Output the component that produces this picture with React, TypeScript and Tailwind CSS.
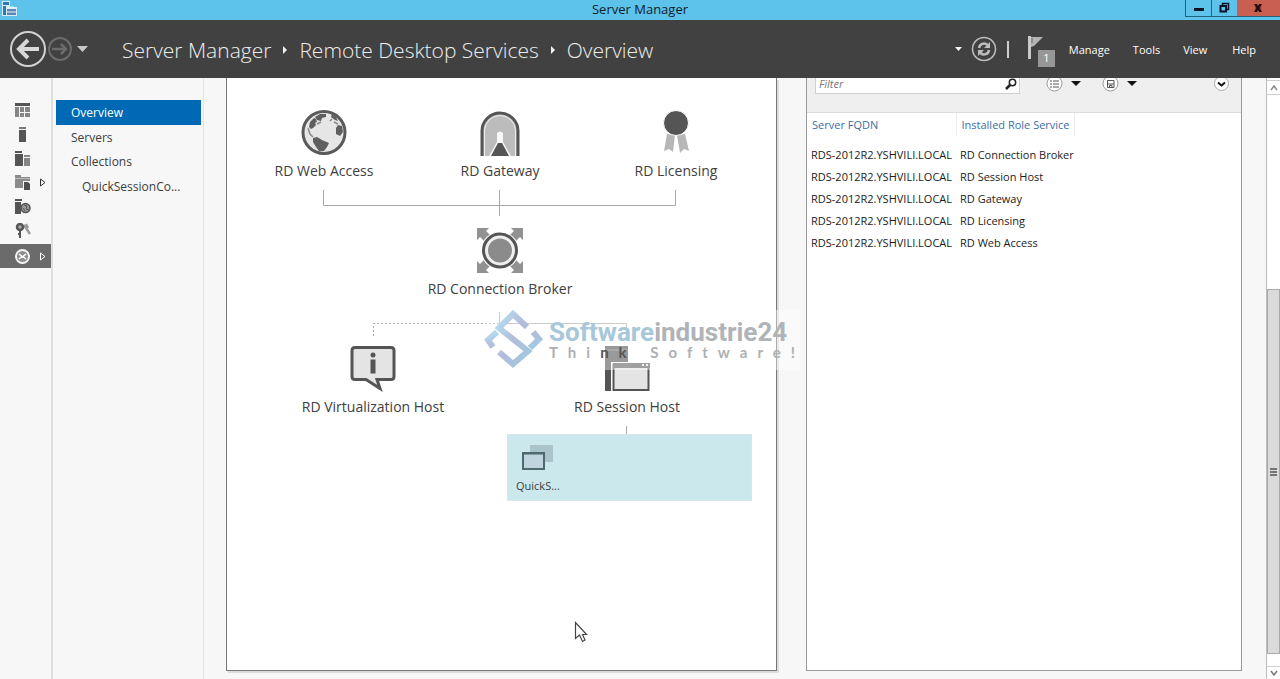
import React from 'react';

type NodeProps = { place: string; label: string; children: React.ReactNode };

const roles = [
  'RD Connection Broker',
  'RD Session Host',
  'RD Gateway',
  'RD Licensing',
  'RD Web Access',
];

function Node({ place, label, children }: NodeProps) {
  return (
    <div className={`absolute flex w-[180px] flex-col items-center ${place}`}>
      <svg className="h-[46px] w-[46px]" viewBox="0 0 46 46" aria-hidden="true">
        {children}
      </svg>
      <span className="mt-[5px] text-sm leading-5 whitespace-nowrap">{label}</span>
    </div>
  );
}

function AppIcon() {
  return (
    <svg className="h-4 w-4" viewBox="0 0 16 16" aria-hidden="true">
      <path d="M0 0h8v6h7v9H0z" fill="#d5edf8" />
      <path d="M1 1h6v3H1zM1 5h3v9H1z" fill="#2f78b4" />
      <path d="M5 8h9v6H5z" fill="#5f87b5" />
      <path d="M7 8V6h5v2M5 11h9" fill="none" stroke="#e6f3fa" />
    </svg>
  );
}

function TitleBar() {
  return (
    <div className="flex h-5 shrink-0 items-start bg-[#5dc3ea]">
      <div className="flex w-[95px] pt-px pl-0.5">
        <AppIcon />
      </div>
      <h1 className="flex-1 text-center text-[13px] leading-[19px] text-[#10202a]">Server Manager</h1>
      <div className="flex h-[17px] w-[95px] border-b border-l border-[#25617c]">
        <button aria-label="Minimize" className="flex w-[26px] items-center justify-center border-r border-[#25617c]">
          <svg className="h-3 w-3" viewBox="0 0 12 12">
            <path d="M1 6h10v3H1z" fill="#06142a" />
          </svg>
        </button>
        <button aria-label="Restore" className="flex w-[25px] items-center justify-center">
          <svg className="h-3 w-3" viewBox="0 0 12 12" fill="none" stroke="#06142a">
            <path d="M3.500 3V1.500h6v6H8" strokeWidth="1.500" />
            <path d="M1.500 4h5.500v5.500H1.500z" strokeWidth="2" />
          </svg>
        </button>
        <button aria-label="Close" className="flex flex-1 items-center justify-center bg-[#c85f52]">
          <svg className="h-3 w-3" viewBox="0 0 12 12">
            <path d="M1 2h3l1 2 1-2h3L7 6l2 4H6L5 8l-1 2H1l2-4z" fill="#2b0d0d" />
          </svg>
        </button>
      </div>
    </div>
  );
}

function Crumb() {
  return (
    <svg className="mx-[10px] h-2 w-2" viewBox="0 0 8 8" aria-hidden="true">
      <path d="M2 0l4 4-4 4z" fill="#f2f2f2" />
    </svg>
  );
}

function Header() {
  return (
    <header className="flex h-[58px] shrink-0 items-center bg-[#414141] text-[#eeeeee]">
      <div className="flex w-[122px] items-center pl-[9px]">
        <button aria-label="Back">
          <svg className="h-[38px] w-[38px]" viewBox="0 0 38 38" fill="none">
            <circle cx="19" cy="19" r="17" stroke="#d2d2d2" strokeWidth="2" />
            <path d="M30 19H11M19 10l-9 9 9 9" stroke="#d8d8d8" strokeWidth="4" />
          </svg>
        </button>
        <button aria-label="Forward">
          <svg className="h-[26px] w-[26px]" viewBox="0 0 26 26" fill="none" stroke="#6c6c6c">
            <circle cx="13" cy="13" r="11" strokeWidth="2" />
            <path d="M5 13h14M14 8l5 5-5 5" strokeWidth="2.500" />
          </svg>
        </button>
        <button aria-label="History" className="ml-1">
          <svg className="h-[6px] w-[11px]" viewBox="0 0 11 6">
            <path d="M0 0h11L5.500 6z" fill="#c8c8c8" />
          </svg>
        </button>
      </div>
      <nav aria-label="Breadcrumb" className="flex flex-1 items-center pt-0.5 text-[21px] leading-8 font-light whitespace-nowrap">
        <a href="#server-manager">Server Manager</a>
        <Crumb />
        <a href="#rds">Remote Desktop Services</a>
        <Crumb />
        <a href="#overview">Overview</a>
      </nav>
      <div className="flex items-center">
        <button aria-label="Refresh options">
          <svg className="h-1 w-[7px]" viewBox="0 0 7 4">
            <path d="M0 0h7L3.500 4z" fill="#f5f5f5" />
          </svg>
        </button>
        <button aria-label="Refresh" className="ml-[9px]">
          <svg className="h-[26px] w-[26px]" viewBox="0 0 26 26" fill="none" stroke="#bdbdbd">
            <circle cx="13" cy="13" r="11.500" strokeWidth="1.500" />
            <path d="M8 12a5 5 0 0 1 8.500-3M18 14a5 5 0 0 1-8.500 3" strokeWidth="2.500" />
            <path d="M19 6v6h-6zM7 20v-6h6z" fill="#bdbdbd" stroke="none" />
          </svg>
        </button>
        <span className="ml-[10px] h-[17px] w-0.5 bg-[#cfcfcf]" />
        <button aria-label="Notifications: 1" className="relative ml-[19px] h-9 w-[27px]">
          <svg className="h-9 w-[27px]" viewBox="0 0 27 36" aria-hidden="true">
            <path d="M0 5h3v23H0z" fill="#c9c9c9" />
            <path d="M3 6h12L6 15l-3 1z" fill="#b4b4b4" />
            <path d="M4 7v5" stroke="#666" />
          </svg>
          <span className="absolute right-0 bottom-0 flex h-[17px] w-[17px] items-center justify-center bg-[#979797] text-[11px] text-white">
            1
          </span>
        </button>
        <div className="flex gap-[23px] pt-0.5 pr-6 pl-[14px] text-[11px] leading-4 text-white">
          <button>Manage</button>
          <button>Tools</button>
          <button>View</button>
          <button className="ml-0.5">Help</button>
        </div>
      </div>
    </header>
  );
}

const railIcons: { name: string; arrow?: boolean; active?: boolean; art: React.ReactNode }[] = [
  {
    name: 'Dashboard',
    art: (
      <>
        <path d="M0 0h15v3H0z" fill="#555" />
        <path d="M0 4h4v10H0zM5 4h4v5H5zM10 4h5v5h-5zM5 10h4v4H5zM10 10h5v4h-5z" fill="#858585" />
      </>
    ),
  },
  {
    name: 'Local Server',
    art: (
      <>
        <path d="M4 0h7v2H4z" fill="#777" />
        <path d="M4 3h7v12H4z" fill="#555" />
      </>
    ),
  },
  {
    name: 'All Servers',
    art: (
      <>
        <path d="M0 0h7v2H0zM0 3h8v12H0z" fill="#555" />
        <path d="M9 4h6v2H9zM9 7h6v8H9z" fill="#858585" />
      </>
    ),
  },
  {
    name: 'File and Storage Services',
    arrow: true,
    art: (
      <>
        <path d="M0 0h6v2h9v4H8v7H0z" fill="#8b8b8b" />
        <path d="M9 7h4l2 2v6H9z" fill="#4e4e4e" />
        <path d="M0 3.500h15" stroke="#b9b9b9" />
      </>
    ),
  },
  {
    name: 'IIS',
    art: (
      <>
        <path d="M0 0h7v2H0zM0 3h6v12H0z" fill="#555" />
        <circle cx="10.500" cy="9" r="4.500" fill="#999" stroke="#555" strokeWidth="1.500" />
        <path d="M9 6l3 1-1 3 3 1M8 9l2 3" stroke="#555" fill="none" />
      </>
    ),
  },
  {
    name: 'Licensing keys',
    art: (
      <>
        <path d="M9 2l6 9M11 1l2 4" stroke="#9b9b9b" strokeWidth="2.500" />
        <circle cx="5" cy="4" r="3" fill="#aaa" stroke="#555" strokeWidth="2.500" />
        <path d="M5 7v8M5 11h-2" stroke="#555" strokeWidth="2" />
      </>
    ),
  },
  {
    name: 'Remote Desktop Services',
    arrow: true,
    active: true,
    art: (
      <>
        <circle cx="7.500" cy="7.500" r="6.500" fill="#8d8d8d" stroke="#f5f5f5" strokeWidth="2" />
        <path d="M4 5l3 2.500L4 10M11 5L8 7.500 11 10" stroke="#fff" strokeWidth="1.500" fill="none" />
      </>
    ),
  },
];

function Rail() {
  return (
    <nav aria-label="Roles" className="w-[53px] shrink-0 border-r-2 border-[#dedede] pt-5">
      <ul>
        {railIcons.map((item) => (
          <li key={item.name}>
            <button
              aria-label={item.name}
              className={`flex h-6 w-full items-center pl-[15px] ${item.active ? 'mt-[2px] bg-[#6b6b6b] text-white' : 'text-[#333]'}`}
            >
              <svg className="h-[15px] w-4" viewBox="0 0 16 15" aria-hidden="true">
                {item.art}
              </svg>
              {item.arrow && (
                <svg className="ml-2 h-[9px] w-[7px]" viewBox="0 0 7 9" fill="none" stroke="currentColor" aria-hidden="true">
                  <path d="M1.500 1v7L6 4.500z" />
                </svg>
              )}
            </button>
          </li>
        ))}
      </ul>
    </nav>
  );
}

function SideNav() {
  return (
    <nav aria-label="Remote Desktop Services" className="w-[151px] shrink-0 border-r border-[#e3e3e3] pt-[22px] pr-0.5 pl-[3px] text-[12px] text-[#3c3c3c]">
      <a href="#overview" aria-current="page" className="mb-px block h-[25px] bg-[#0069b6] pl-[15px] leading-[25px] text-white">
        Overview
      </a>
      <a href="#servers" className="block h-6 pl-[15px] leading-6">Servers</a>
      <a href="#collections" className="block h-6 pl-[15px] leading-6">Collections</a>
      <a href="#quick" className="block h-[26px] pl-[26px] leading-[26px]">QuickSessionCo...</a>
    </nav>
  );
}

function Watermark() {
  return (
    <div className="pointer-events-none absolute top-[232px] left-[257px] flex h-[60px] w-[316px] items-center bg-white/40">
      <svg className="h-[60px] w-[60px] shrink-0" viewBox="0 0 60 60" aria-hidden="true">
        <defs>
          <linearGradient id="mark" x1="0" y1="0" x2="1" y2="1">
            <stop offset="0" stopColor="#b5dff0" />
            <stop offset="0.500" stopColor="#b3bcd9" />
            <stop offset="1" stopColor="#9fcbe4" />
          </linearGradient>
        </defs>
        <g fill="none" stroke="url(#mark)" strokeWidth="6">
          <path d="M43 17L29 4 15 18l29 23-15 13-14-12" />
          <path d="M9 37l-5-7 9-8M49 22l6 7-9 9" />
        </g>
      </svg>
      <div className="ml-[5px] font-[Roboto,sans-serif] whitespace-nowrap">
        <div className="text-[26px] leading-6 font-bold text-[#b0b3b7]">
          <span className="text-[#a7c7da]">Software</span>industrie24
        </div>
        <div className="font-[Lato,sans-serif] text-[15px] leading-4 font-bold tracking-[10px] text-[#adb0b3]">
          Thi<span className="text-[#555]">nk</span> Software!
        </div>
      </div>
    </div>
  );
}

function Deployment() {
  return (
    <section aria-label="Deployment overview" className="border border-t-0 border-[#777] bg-white shadow-[2px_2px_0_#dcdcdc]">
      <div className="relative mx-auto h-[500px] w-[549px] text-[#404040]">
        <svg className="absolute inset-0 h-full w-full" viewBox="0 0 549 500" fill="none" stroke="#a8a8a8" aria-hidden="true">
          <path d="M96.500 112v15.500h352V112M272.500 112v26M272.500 234v11.500h127V258M399.500 348v8" />
          <path d="M272 245.500H146.500V260" strokeDasharray="2 2" />
        </svg>
        <Node place="left-[7px] top-[32px]" label="RD Web Access">
          <circle cx="23" cy="22.500" r="21" fill="#e6e6e6" stroke="#5a5a5a" strokeWidth="3" />
          <g fill="#5f5f5f">
            <path d="M8 17l1-5 4-4 2 1 1 3-2 1 1 2-3 3-2 1zM14 7l5-3 6 0 0 3-4 1-1 3-4-1z" />
            <path d="M31 4l4 3 2 4-3-1-4-3zM35 18l2-3 4 1 1 6-3 4-4-2z" />
            <path d="M12 28l4-1 5 3 7 3-2 4-3 4-5 0-3-4-3-5z" />
          </g>
          <path d="M7 18l2 6 3 3M16 14l4-2M29 11l2-2M33 12l4 2" fill="none" stroke="#8a8a8a" strokeWidth="1.500" />
        </Node>
        <Node place="left-[183px] top-[32px]" label="RD Gateway">
          <path d="M5 46V21a18 18 0 0 1 36 0v25" fill="#bcbcbc" stroke="#555" strokeWidth="3" />
          <path d="M7.500 46V21a15.500 15.500 0 0 1 31 0v25" fill="none" stroke="#ededed" />
          <path d="M12 46l8-14v-9q3-3 6 0v9l8 14z" fill="#f7f7f7" />
          <path d="M14 46l7-13h4l7 13z" fill="#555" />
        </Node>
        <Node place="left-[359px] top-[32px]" label="RD Licensing">
          <path d="M14 24l8 1-2 17-4-3-5 2zM24 25l8-1 4 17-5-2-4 4z" fill="#b7b7b7" />
          <circle cx="23" cy="13" r="12.500" fill="#555" stroke="#fff" />
        </Node>
        <Node place="left-[183px] top-[150px]" label="RD Connection Broker">
          <path d="M0 0h12l-3 3 8 8-6 6-8-8-3 3zM46 0H34l3 3-8 8 6 6 8-8 3 3zM0 45h12l-3-3 8-8-6-6-8 8-3-3zM46 45H34l3-3-8-8 6-6 8 8 3-3z" fill="#929292" />
          <circle cx="23" cy="22.500" r="18" fill="#efefef" stroke="#fff" strokeWidth="2" />
          <circle cx="23" cy="22.500" r="16.500" fill="#efefef" stroke="#555" strokeWidth="3" />
          <circle cx="23" cy="22.500" r="12" fill="#8b8b8b" />
        </Node>
        <Node place="left-[56px] top-[268px]" label="RD Virtualization Host">
          <path d="M5 1.500h36q3 0 3 3v26q0 3-3 3H27l3 9-14-9H5q-3 0-3-3v-26q0-3 3-3z" fill="#e4e4e4" stroke="#555" strokeWidth="3" />
          <circle cx="23" cy="9" r="2.500" fill="#555" />
          <path d="M20.500 13.500h5v14h-5z" fill="#555" />
        </Node>
        <Node place="left-[310px] top-[268px]" label="RD Session Host">
          <path d="M1 0h23v45H1z" fill="#555" />
          <path d="M1 4h23" stroke="#888" />
          <path d="M7 16h39v30H7z" fill="#fff" />
          <path d="M9.500 18.500h35v25.500h-35z" fill="#e4e4e4" stroke="#555" strokeWidth="2" />
          <path d="M9 17h37v5H9z" fill="#626262" />
          <path d="M38 18h2v2h-2zM42 18h2v2h-2z" fill="#eee" />
        </Node>
        <button className="absolute top-[356px] left-[280px] flex h-[67px] w-[245px] flex-col items-start bg-[#cbe9ed] pt-[11px] pl-[9px] outline outline-[#d7e6e8] -outline-offset-1">
          <svg className="ml-[6px] h-[26px] w-[31px]" viewBox="0 0 31 26" aria-hidden="true">
            <path d="M8 0h23v17H8z" fill="#abc4cb" />
            <path d="M1 8.500h21v15.500H1z" fill="#bfd4de" stroke="#4f676f" strokeWidth="2" />
            <path d="M0 8h23" stroke="#4f676f" strokeWidth="2" />
          </svg>
          <span className="mt-[7px] text-[11px] leading-4">QuickS...</span>
        </button>
        <Watermark />
        <svg className="pointer-events-none absolute top-[543px] left-[347px] h-[22px] w-4" viewBox="0 0 16 22" aria-hidden="true">
          <path d="M1.500 1.500v16l4-3.500 3 6.500 2.500-1.500-2.500-5.500h4z" fill="#fff" stroke="#444" strokeWidth="1.200" />
        </svg>
      </div>
    </section>
  );
}

function DownArrow() {
  return (
    <svg className="mt-[3px] h-[5px] w-[10px]" viewBox="0 0 10 5" aria-hidden="true">
      <path d="M0 0h10L5 5z" fill="#111" />
    </svg>
  );
}

function Servers() {
  return (
    <section aria-label="Deployment servers" className="border border-t-0 border-[#9a9a9a] bg-white">
      <div className="flex h-[35px] items-start border-b border-[#dcdcdc] bg-[#efefef] pr-[11px] pl-2">
        <div className="flex h-4 w-[205px] items-center border border-t-0 border-[#cfcfcf] bg-white pr-0.5">
          <input
            aria-label="Filter"
            placeholder="Filter"
            className="h-4 min-w-0 flex-1 px-[3px] pb-0.5 text-[11px] italic outline-none placeholder:text-[#777]"
          />
          <button aria-label="Search" className="pb-1">
            <svg className="h-3 w-3" viewBox="0 0 12 12" fill="none" stroke="#222">
              <circle cx="7.500" cy="4.500" r="3.200" strokeWidth="1.500" />
              <path d="M5 7L1 11" strokeWidth="2.500" />
            </svg>
          </button>
        </div>
        <div className="flex flex-1 items-start pl-[26px]">
          <button aria-label="Saved queries" className="flex items-start gap-2">
            <svg className="h-[17px] w-[17px]" viewBox="0 0 17 17" fill="none">
              <circle cx="8.500" cy="5.500" r="7.500" fill="#fff" stroke="#999" />
              <path d="M4 3h2M4 6h2M4 9h2M7 3h6M7 6h6M7 9h6" stroke="#555" />
            </svg>
            <DownArrow />
          </button>
          <button aria-label="Save query" className="ml-[21px] flex items-start gap-2">
            <svg className="h-[17px] w-[17px]" viewBox="0 0 17 17" fill="none">
              <circle cx="8.500" cy="5.500" r="7.500" fill="#fff" stroke="#999" />
              <path d="M5.500 2.500h6.500v7H5.500z" stroke="#555" />
              <path d="M6 6h6M7.500 9V7.500h2.500V9" stroke="#555" />
            </svg>
            <DownArrow />
          </button>
          <button aria-label="Expand" className="ml-auto">
            <svg className="h-[17px] w-[17px]" viewBox="0 0 17 17" fill="none">
              <circle cx="8.500" cy="5.500" r="7" fill="#fff" stroke="#aaa" />
              <path d="M5 4.500l3.500 3 3.500-3" stroke="#111" strokeWidth="2" />
            </svg>
          </button>
        </div>
      </div>
      <table className="w-full table-fixed text-left text-[11px] text-[#1c1c1c]">
        <thead className="text-[#3a6fa8]">
          <tr className="h-[23px]">
            <th className="w-[149px] border-r border-[#ececec] pl-[5px] leading-4 font-normal">Server FQDN</th>
            <th className="w-[118px] border-r border-[#ececec] pl-[5px] leading-4 font-normal">Installed Role Service</th>
            <th aria-label="Empty" />
          </tr>
          <tr className="h-2">
            <td colSpan={3} />
          </tr>
        </thead>
        <tbody>
          {roles.map((role) => (
            <tr key={role} className="h-[22px] whitespace-nowrap">
              <td className="pl-1 leading-4">RDS-2012R2.YSHVILI.LOCAL</td>
              <td className="pl-1 leading-4">{role}</td>
              <td />
            </tr>
          ))}
        </tbody>
      </table>
    </section>
  );
}

function ScrollBar() {
  return (
    <div className="flex w-[14px] shrink-0 flex-col border-l border-[#bcbcbc] bg-white pt-0.5">
      <button aria-label="Scroll up" className="flex h-[15px] items-center justify-center border-y border-[#cfcfcf]">
        <svg className="h-2 w-2" viewBox="0 0 8 8" fill="none">
          <path d="M1 6l3-4 3 4" stroke="#8a8a8a" strokeWidth="1.500" />
        </svg>
      </button>
      <div className="flex flex-1 flex-col pb-3">
        <div className="grow-[195] basis-0" />
        <div className="flex grow-[364] basis-0 items-center justify-center border border-[#a9a9a9] bg-[#dadada]">
          <svg className="h-2 w-[7px]" viewBox="0 0 7 8">
            <path d="M0 1h7M0 4h7M0 7h7" stroke="#555" strokeWidth="1.500" />
          </svg>
        </div>
      </div>
      <button aria-label="Scroll down" className="flex h-[13px] items-center justify-center border-t border-[#cfcfcf]">
        <svg className="h-2 w-2" viewBox="0 0 8 8" fill="none">
          <path d="M1 2l3 4 3-4" stroke="#777" strokeWidth="1.500" />
        </svg>
      </button>
    </div>
  );
}

export default function App() {
  return (
    <div className="flex h-screen flex-col overflow-hidden bg-[#f7f7f7] font-['Open_Sans','Noto_Sans',sans-serif]">
      <TitleBar />
      <Header />
      <div className="flex min-h-0 flex-1">
        <Rail />
        <SideNav />
        <main className="grid min-w-0 flex-1 grid-cols-[551fr_436fr] gap-[29px] pr-6 pb-2 pl-[22px]">
          <Deployment />
          <Servers />
        </main>
        <ScrollBar />
      </div>
    </div>
  );
}
